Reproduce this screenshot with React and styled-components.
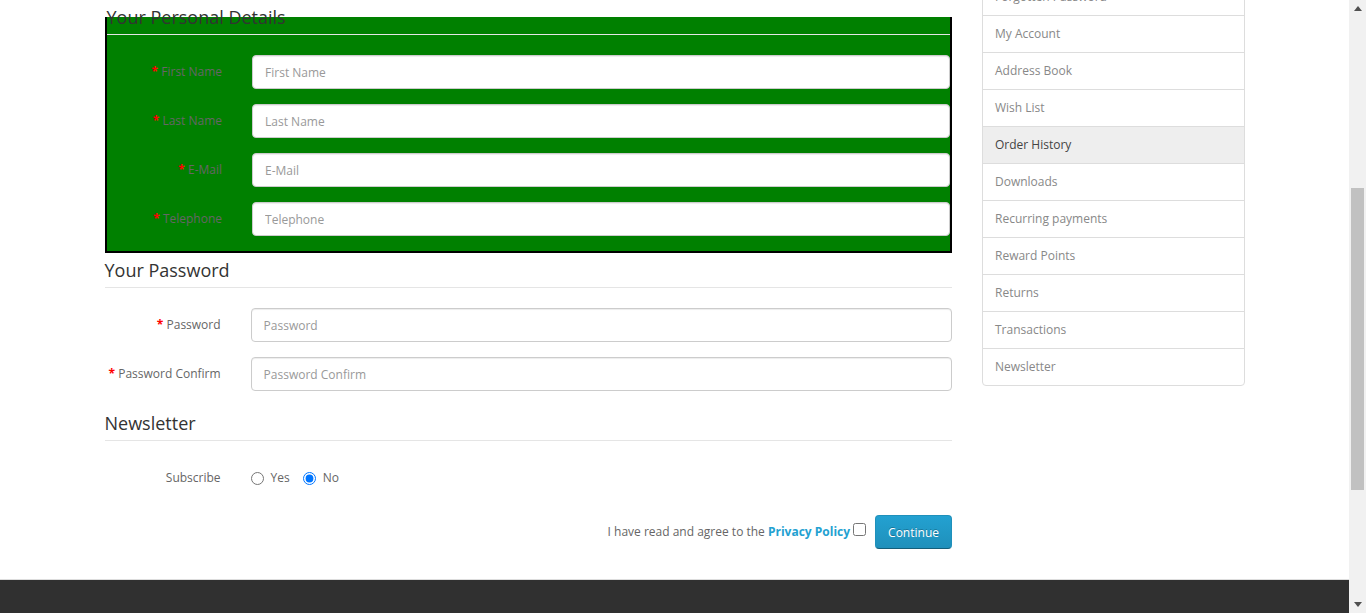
import React from "react";
import styled, { createGlobalStyle } from "styled-components";

const GlobalStyle = createGlobalStyle`
  html, body {
    margin: 0;
    padding: 0;
    overflow: hidden;
  }
  body {
    font-family: "Open Sans", "Liberation Sans", sans-serif;
    font-size: 12px;
    line-height: 20px;
    color: #666;
  }
  * {
    box-sizing: border-box;
  }
`;

const Screen = styled.div`
  display: flex;
  width: 1366px;
  height: 613px;
  overflow: hidden;
  background: #fff;
`;

const Page = styled.div`
  flex: 1;
  min-width: 0;
  display: flex;
  flex-direction: column;
  overflow: hidden;
`;

const Container = styled.div`
  width: 1170px;
  margin: 0 auto;
  padding: 0 15px;
  display: grid;
  grid-template-columns: 847.5px 262.5px;
  column-gap: 30px;
  align-items: start;
`;

const Content = styled.div`
  min-width: 0;
`;

const Fieldset = styled.fieldset`
  margin: 0;
  padding: 0;
  min-width: 0;
  border: ${(p) => (p.$highlight ? "2px solid #000" : "0")};
  background: ${(p) => (p.$highlight ? "#008000" : "transparent")};
`;

const Legend = styled.legend`
  display: block;
  width: 100%;
  padding: 7px 0;
  margin: 0 0 20px;
  font-size: 18px;
  line-height: 20px;
  color: #333;
  border-bottom: 1px solid #e5e5e5;
`;

const FormGroup = styled.div`
  display: grid;
  grid-template-columns: 13.7% 1fr;
  column-gap: 30px;
  margin-bottom: 15px;
`;

const Label = styled.label`
  text-align: right;
  padding-top: 7px;
  line-height: 20px;
  font-size: 12px;
  color: #666;
  white-space: nowrap;

  ${(p) =>
    p.$required &&
    `
    &::before {
      content: "* ";
      color: #f00;
      font-weight: bold;
    }
  `}
`;

const Input = styled.input`
  display: block;
  width: 100%;
  height: 34px;
  padding: 6px 12px;
  font-family: inherit;
  font-size: 12px;
  line-height: 20px;
  color: #555;
  background: #fff;
  border: 1px solid #ccc;
  border-radius: 4px;
  box-shadow: inset 0 1px 1px rgba(0, 0, 0, 0.075);
  outline: none;

  &::placeholder {
    color: #999;
  }
`;

const RadioGroup = styled.div`
  display: flex;
  align-items: center;
  gap: 13px;
  padding-top: 7px;
  height: 27px;
`;

const RadioOption = styled.label`
  display: inline-flex;
  align-items: center;
  gap: 7px;
  line-height: 20px;
  color: #666;

  input {
    margin: 0;
    width: 13px;
    height: 13px;
  }
`;

const Buttons = styled.div`
  display: flex;
  justify-content: flex-end;
  align-items: center;
  margin-top: 12px;
  color: #666;
`;

const AgreeText = styled.span`
  line-height: 20px;
`;

const PolicyLink = styled.a`
  color: #23a1d1;
  font-weight: bold;
  text-decoration: none;
`;

const AgreeBox = styled.input`
  margin: 0 0 6px 3px;
  width: 13px;
  height: 13px;
`;

const PrimaryButton = styled.button`
  margin-left: 9px;
  height: 34px;
  padding: 7.5px 12px;
  font-family: inherit;
  font-size: 12px;
  line-height: 17px;
  color: #fff;
  text-shadow: 0 -1px 0 rgba(0, 0, 0, 0.25);
  background: linear-gradient(to bottom, #23a1d1, #1f90bb);
  border: 1px solid;
  border-color: #1f90bb #1f90bb #145e7a;
  border-radius: 4px;
  cursor: pointer;
`;

const Aside = styled.aside`
  min-width: 0;
`;

const ListGroup = styled.div`
  margin-top: -22px;
  display: flex;
  flex-direction: column;
`;

const ListItem = styled.a`
  display: block;
  padding: 8px 12px;
  margin-bottom: -1px;
  border: 1px solid #ddd;
  font-size: 12px;
  line-height: 20px;
  color: ${(p) => (p.$active ? "#444" : "#888")};
  background: ${(p) => (p.$active ? "#eee" : "#fff")};
  text-decoration: none;

  &:last-child {
    margin-bottom: 0;
    border-radius: 0 0 4px 4px;
  }
`;

const Footer = styled.footer`
  margin-top: 30px;
  flex: 1;
  min-height: 60px;
  background: #303030;
  border-top: 1px solid #ddd;
`;

const ScrollTrack = styled.div`
  width: 17px;
  flex: none;
  display: flex;
  flex-direction: column;
  background: #f1f1f1;
`;

const ScrollArrow = styled.div`
  height: 17px;
  display: flex;
  align-items: center;
  justify-content: center;
`;

const ScrollThumb = styled.div`
  margin: 171px 2px 0;
  height: 302px;
  background: #c1c1c1;
`;

const ScrollRest = styled.div`
  flex: 1;
`;

const personal = [
  { id: "firstname", label: "First Name" },
  { id: "lastname", label: "Last Name" },
  { id: "email", label: "E-Mail" },
  { id: "telephone", label: "Telephone" },
];

const passwords = [
  { id: "password", label: "Password" },
  { id: "confirm", label: "Password Confirm" },
];

const accountLinks = [
  "Forgotten Password",
  "My Account",
  "Address Book",
  "Wish List",
  "Order History",
  "Downloads",
  "Recurring payments",
  "Reward Points",
  "Returns",
  "Transactions",
  "Newsletter",
];

const Arrow = ({ down }) => (
  <svg width="8" height="5" viewBox="0 0 8 5">
    <path d={down ? "M0 0h8L4 5z" : "M0 5h8L4 0z"} fill="#505050" />
  </svg>
);

export default function App() {
  return (
    <>
      <GlobalStyle />
      <Screen>
        <Page>
          <Container>
            <Content>
              <Fieldset $highlight>
                <Legend>Your Personal Details</Legend>
                {personal.map((f) => (
                  <FormGroup key={f.id}>
                    <Label $required htmlFor={f.id}>
                      {f.label}
                    </Label>
                    <Input id={f.id} placeholder={f.label} />
                  </FormGroup>
                ))}
              </Fieldset>

              <Fieldset>
                <Legend>Your Password</Legend>
                {passwords.map((f) => (
                  <FormGroup key={f.id}>
                    <Label $required htmlFor={f.id}>
                      {f.label}
                    </Label>
                    <Input id={f.id} type="password" placeholder={f.label} />
                  </FormGroup>
                ))}
              </Fieldset>

              <Fieldset>
                <Legend>Newsletter</Legend>
                <FormGroup>
                  <Label>Subscribe</Label>
                  <RadioGroup>
                    <RadioOption>
                      <input type="radio" name="newsletter" value="1" />
                      Yes
                    </RadioOption>
                    <RadioOption>
                      <input type="radio" name="newsletter" value="0" defaultChecked />
                      No
                    </RadioOption>
                  </RadioGroup>
                </FormGroup>
              </Fieldset>

              <Buttons>
                <AgreeText>
                  I have read and agree to the <PolicyLink href="#">Privacy Policy</PolicyLink>
                </AgreeText>
                <AgreeBox type="checkbox" />
                <PrimaryButton type="button">Continue</PrimaryButton>
              </Buttons>
            </Content>

            <Aside>
              <ListGroup>
                {accountLinks.map((name) => (
                  <ListItem key={name} href="#" $active={name === "Order History"}>
                    {name}
                  </ListItem>
                ))}
              </ListGroup>
            </Aside>
          </Container>
          <Footer />
        </Page>
        <ScrollTrack>
          <ScrollArrow>
            <Arrow />
          </ScrollArrow>
          <ScrollThumb />
          <ScrollRest />
          <ScrollArrow>
            <Arrow down />
          </ScrollArrow>
        </ScrollTrack>
      </Screen>
    </>
  );
}
